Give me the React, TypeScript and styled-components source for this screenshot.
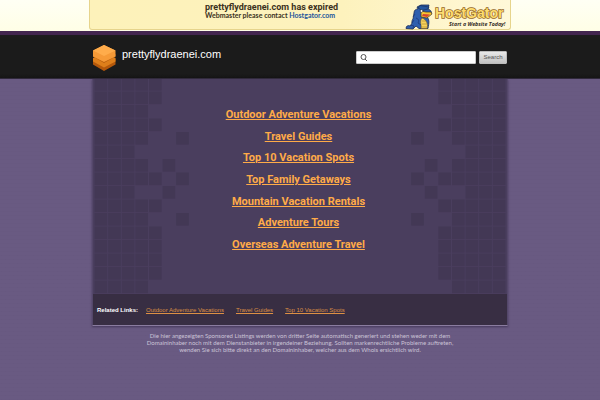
import React from "react";
import styled, { createGlobalStyle } from "styled-components";

const GlobalStyle = createGlobalStyle`
  *, *::before, *::after { box-sizing: border-box; }
  html { min-height: 100%; }
  body {
    margin: 0;
    min-height: 100vh;
    background:
      repeating-linear-gradient(0deg, rgba(40, 25, 60, 0.02) 0 1px, transparent 1px 4px),
      #695a82;
    font-family: "Liberation Sans", Arial, sans-serif;
    color: #fff;
  }
`;

const Notice = styled.aside`
  display: flex;
  justify-content: center;
  height: 31px;
  background: linear-gradient(#fffff4, #fffee6);
`;

const NoticeCard = styled.div`
  display: flex;
  justify-content: space-between;
  width: 100%;
  max-width: 422px;
  height: 30px;
  padding-left: 115px;
  border: 1px solid #e6d48c;
  border-top: 0;
  border-radius: 0 0 3px 3px;
  background: linear-gradient(90deg, #fdf2ba, #fdf2bd 60%, #fff8d8);
`;

const NoticeText = styled.div`
  padding-top: 3px;
  color: #3b3120;
  font-weight: bold;
  white-space: nowrap;
`;

const NoticeTitle = styled.p`
  margin: 0;
  font-family: Roboto, "Liberation Sans", sans-serif;
  font-size: 9px;
  line-height: 9px;
`;

const NoticeDetail = styled.p`
  margin: 0;
  font-family: Lato, "Liberation Sans", sans-serif;
  font-size: 7px;
  line-height: 7px;
`;

const NoticeLink = styled.a`
  color: #23559b;
  text-decoration: none;
`;

const Sponsor = styled.a`
  height: 30px;
`;

const Header = styled.header`
  display: flex;
  justify-content: center;
  height: 48px;
  border-top: 4px solid #43254f;
  border-bottom: 1px solid #30293b;
  background: linear-gradient(#1d1b1e, #1b1b1b 10%, #1b1b1b 90%, #151515);
`;

const HeaderRow = styled.div`
  display: flex;
  align-items: center;
  justify-content: space-between;
  width: 100%;
  max-width: 416px;
  padding: 2px 1px 0 0;
`;

const Brand = styled.div`
  display: flex;
  align-items: center;
  gap: 6px;
`;

const BrandName = styled.h1`
  margin: 0 0 7px;
  font-size: 11px;
  font-weight: normal;
  line-height: 13px;
`;

const SearchForm = styled.form`
  display: flex;
  gap: 3px;
`;

const SearchField = styled.label`
  display: flex;
  align-items: center;
  width: 120px;
  height: 13px;
  padding-left: 3px;
  border: 1px solid #ccc;
  border-radius: 1px;
  background: #fff;
`;

const SearchInput = styled.input`
  flex: 1;
  min-width: 0;
  height: 11px;
  padding: 0 3px;
  border: 0;
  outline: 0;
  background: transparent;
  font: 8px "Liberation Sans", Arial, sans-serif;
`;

const SearchButton = styled.button`
  width: 28px;
  height: 13px;
  padding: 0;
  border: 1px solid #bbb;
  border-radius: 1px;
  background: linear-gradient(#e8e8e8, #c2c2c2);
  color: #555;
  font: 6px/11px "Liberation Sans", Arial, sans-serif;
`;

const Panel = styled.main`
  width: 100%;
  max-width: 416px;
  margin: 0 auto;
  border: 1px solid #54476a;
  border-top: 0;
  border-bottom-color: #8a7c9f;
  background: #4a3e5e;
  box-shadow: 0 1px 2px #45385b;
`;

const Stage = styled.div`
  display: grid;
  grid-template-columns: 97px 1fr 97px;
  height: 215px;
`;

const LinkList = styled.ul`
  display: flex;
  flex-direction: column;
  align-items: center;
  justify-content: space-between;
  margin: 0;
  padding: 29px 3px 43px 0;
  list-style: none;
`;

const LinkItem = styled.li`
  height: 13px;
  font-family: Roboto, "Liberation Sans", sans-serif;
  font-size: 11px;
  font-weight: bold;
  line-height: 13px;
  white-space: nowrap;
`;

const TopicLink = styled.a`
  color: #ffab48;
  text-decoration: underline;
`;

const Related = styled.nav`
  display: flex;
  align-items: center;
  gap: 12px;
  height: 31px;
  padding: 1px 4px 0;
  background: #382e43;
  font-size: 6px;
  line-height: 10px;
`;

const RelatedTitle = styled.strong`
  margin-right: -4px;
`;

const RelatedLink = styled.a`
  color: #dd9044;
`;

const Disclaimer = styled.footer`
  margin: 6px auto 0;
  color: #cbc3d6;
  font-family: Lato, "Liberation Sans", sans-serif;
  font-size: 6px;
  line-height: 7px;
  text-align: center;
`;

const topics = [
  "Outdoor Adventure Vacations",
  "Travel Guides",
  "Top 10 Vacation Spots",
  "Top Family Getaways",
  "Mountain Vacation Rentals",
  "Adventure Tours",
  "Overseas Adventure Travel",
];

const tileRows = [
  [0, 1, 2, 3, 4],
  [0, 1, 2, 3, 4],
  [0, 1, 2, 3],
  [0, 1, 2, 3, 4],
  [0, 1, 2, 3, 6],
  [0, 1, 2],
  [0, 1, 2, 3, 5],
  [0, 1, 2, 3, 4, 6],
  [0, 1, 2, 5],
  [0, 1, 2, 3, 4],
  [0, 1, 2, 3, 6],
  [0, 1, 2, 3, 4],
  [0, 1, 2, 3, 4],
  [0, 1, 2, 3, 4],
  [0, 1, 2, 3, 4],
  [0, 1, 2, 3],
];

function Mosaic({ mirrored = false }: { mirrored?: boolean }) {
  return (
    <svg width="97" height="215" viewBox="0 0 97 215" aria-hidden="true">
      <g transform={mirrored ? "translate(97 0) scale(-1 1)" : undefined}>
        {tileRows.map((cols, r) =>
          cols.map((c) => (
            <rect
              key={`${r}-${c}`}
              x={1.6 + c * 13.6}
              y={-1 + r * 13.5}
              width="12.6"
              height="12.6"
              fill="#433855"
            />
          ))
        )}
      </g>
    </svg>
  );
}

function CubeLogo() {
  return (
    <svg width="24" height="28" viewBox="0 0 24 28" aria-hidden="true">
      <path d="M1 14.500 12 20 23.500 14.500V20.500L12 27 1 20.500Z" fill="#b4580b" />
      <path d="M1 14 5 12 12 16 19.500 12 23.500 14V17.500L12 23.500 1 17.500Z" fill="#de7f1b" />
      <path d="M1 10 12 16 23.500 10V12.500L12 19 1 12.500Z" fill="#b9600f" />
      <path d="M1 6.500 12 1 23.500 6.500V12.500L12 18 1 12.500Z" fill="#f69a37" />
      <path d="M1 6.500 12 1 23.500 6.500 12 12Z" fill="#ffac4b" />
    </svg>
  );
}

function HostGatorLogo() {
  return (
    <svg width="105" height="30" viewBox="0 0 105 30" role="img" aria-label="HostGator">
      <path d="M1 28.500C1 26 3 25 5 26 8 24 6 21 8 19L9 13C9 10 11 9 13 9L12 7 16 5 24 5 23 9C26 10 27 12 26 14L21 16C25 19 24 23 23 28.500H14L11 26 8 29Z" fill="#2f5fae" stroke="#1b2c55" strokeWidth=".8" />
      <path d="M16 11 21 12 26 12 27 14 22 18 16 17Z" fill="#f8c433" stroke="#3c3423" strokeWidth=".7" />
      <path d="M18 14 25 14.500 22 17 17 16Z" fill="#d74531" />
      <path d="M17 18C20 19 24 23 22 28.500H16C17 25 14 22 17 18Z" fill="#f8d35c" stroke="#6d5825" strokeWidth=".6" />
      <path d="M17 21H21M17 24H22M16 27H22" stroke="#aa852c" strokeWidth=".6" />
      <path d="M13 8 15 5.500 24 7 23 9 17 10.500Z" fill="#25569e" stroke="#17284f" strokeWidth=".6" />
      <circle cx="16.500" cy="11" r="1.300" fill="#fff" stroke="#222" strokeWidth=".5" />
      <path d="M11 18C14 19 14 21 13 23L16 25M10 14 8 17M9 20 7 23M5 25 9 26 8 28" fill="none" stroke="#1d397a" strokeWidth=".8" />
      <text x="30" y="18" fontFamily="Liberation Sans, sans-serif" fontSize="14" fontWeight="bold" fill="#fddc70" stroke="#92651f" strokeWidth="1.400" paintOrder="stroke">HostGator</text>
      <text x="44" y="26" fontFamily="Open Sans, sans-serif" fontSize="5.300" fontWeight="bold" fontStyle="italic" fill="#342c25">Start a Website Today!</text>
    </svg>
  );
}

export default function App() {
  return (
    <>
      <GlobalStyle />
      <Notice>
        <NoticeCard>
          <NoticeText>
            <NoticeTitle>prettyflydraenei.com has expired</NoticeTitle>
            <NoticeDetail>
              Webmaster please contact <NoticeLink href="#">Hostgator.com</NoticeLink>
            </NoticeDetail>
          </NoticeText>
          <Sponsor href="#"><HostGatorLogo /></Sponsor>
        </NoticeCard>
      </Notice>
      <Header>
        <HeaderRow>
          <Brand>
            <CubeLogo />
            <BrandName>prettyflydraenei.com</BrandName>
          </Brand>
          <SearchForm onSubmit={(e) => e.preventDefault()}>
            <SearchField>
              <svg width="8" height="9" viewBox="0 0 8 9" aria-hidden="true">
                <circle cx="3.500" cy="4" r="2.500" fill="none" stroke="#555" />
                <path d="m5 6 2 2" stroke="#555" />
              </svg>
              <SearchInput type="text" aria-label="Search" />
            </SearchField>
            <SearchButton type="submit">Search</SearchButton>
          </SearchForm>
        </HeaderRow>
      </Header>
      <Panel>
        <Stage>
          <Mosaic />
          <LinkList>
            {topics.map((t) => (
              <LinkItem key={t}><TopicLink href="#">{t}</TopicLink></LinkItem>
            ))}
          </LinkList>
          <Mosaic mirrored />
        </Stage>
        <Related>
          <RelatedTitle>Related Links:</RelatedTitle>
          {topics.slice(0, 3).map((t) => (
            <RelatedLink key={t} href="#">{t}</RelatedLink>
          ))}
        </Related>
      </Panel>
      <Disclaimer>
        Die hier angezeigten Sponsored Listings werden von dritter Seite automatisch generiert und stehen weder mit dem
        <br />
        Domaininhaber noch mit dem Dienstanbieter in irgendeiner Beziehung. Sollten markenrechtliche Probleme auftreten,
        <br />
        wenden Sie sich bitte direkt an den Domaininhaber, welcher aus dem Whois ersichtlich wird.
      </Disclaimer>
    </>
  );
}
